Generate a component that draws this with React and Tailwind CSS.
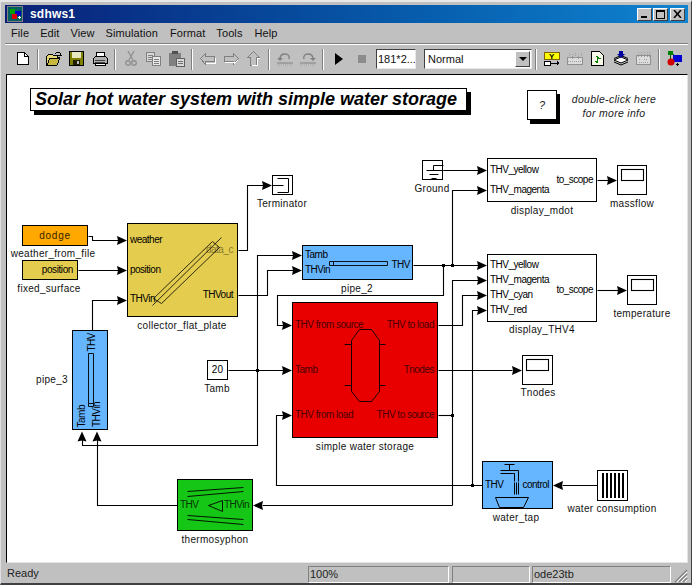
import React from "react";

const F = "font-['Liberation_Sans',Arial,sans-serif]";

function Ico({ children, w = 16, h = 16 }) {
  return (
    <svg width={w} height={h} viewBox={`0 0 ${w} ${h}`} shapeRendering="crispEdges" className="block">
      {children}
    </svg>
  );
}
const Cell = ({ children }) => <div className="w-[23px] flex justify-center items-center mb-[1px]">{children}</div>;
const Sep = () => <div className="mx-[3px] w-[2px] h-[21px] border-l border-l-[#808080] border-r border-r-white" />;

const Menu = ({ c, children }) => <span className={c}>{children}</span>;

function Lbl({ c, children }) {
  return <div className={`absolute -translate-x-1/2 whitespace-nowrap text-[10px] leading-[12px] tracking-[0.3px] text-[#111] ${c}`}>{children}</div>;
}
function Pt({ c, children }) {
  return <div className={`absolute whitespace-nowrap text-[10px] leading-[12px] tracking-[-0.5px] ${c}`}>{children}</div>;
}

const R = (x, y) => `M${x} ${y}L${x - 10} ${y - 4.5}L${x - 9} ${y}L${x - 10} ${y + 4.5}Z`;
const L = (x, y) => `M${x} ${y}L${x + 10} ${y - 4.5}L${x + 9} ${y}L${x + 10} ${y + 4.5}Z`;
const U = (x, y) => `M${x} ${y}L${x - 4.5} ${y + 10}L${x} ${y + 9}L${x + 4.5} ${y + 10}Z`;

const wires = [
  "M88 236H92V240H118", "M78 270H118", "M92 330V300H118", "M238 295H267V270H293", "M238 250H247V185H263",
  "M257 370V255H293", "M257 370V445H82V439", "M228 370H283", "M413 265H478", "M443 265V295H277V325H283",
  "M452 265V190H478", "M443 170H478", "M438 325H462V295H478", "M452 505V280H478", "M438 415H452",
  "M262 505H452", "M97 439V505H177", "M472 485V310H478", "M482 485H276V415H283", "M597 485H562",
  "M597 180H608", "M597 290H618", "M438 370H512",
];
const arrows = [
  R(127, 240), R(127, 270), R(127, 300), R(302, 255), R(302, 270), R(272, 185), R(292, 325), R(292, 370), R(292, 415),
  R(487, 170), R(487, 190), R(487, 265), R(487, 280), R(487, 295), R(487, 310), R(617, 180), R(627, 290), R(522, 370),
  L(253, 505), L(553, 485), U(82, 431), U(97, 431),
];
const dots = [[257, 370], [443, 265], [452, 265], [452, 415], [472, 485]];

export default function App() {
  return (
    <div className={`w-[694px] h-[585px] bg-white overflow-hidden ${F}`}>
      <div className="w-[692px] h-[585px] bg-[#c0c0c0] pt-[3px] pl-[4px] pr-[3px] border-t-2 border-t-[#e8e8e8] border-l border-l-[#e0e0e0] border-r border-r-[#404040] border-b-2 border-b-[#404040] box-border">
        {/* title bar */}
        <div className="h-[18px] flex items-center bg-linear-to-r from-[#0a1f78] to-[#1084d0] pl-[2px] pr-[2px]">
          <Ico>
            <rect x="0" y="0" width="16" height="16" fill="#808080" />
            <rect x="1" y="1" width="14" height="14" fill="#006060" />
            <path d="M3 3h5v5H3z" fill="#00a000" />
            <path d="M8 5h6v5H8z" fill="#0000c0" />
            <path d="M5 8h5v5H5z" fill="#e00000" />
            <path d="M11 11h3v1h-3zM12 10h1v3h-1z" fill="#fff" />
          </Ico>
          <span className="ml-[7px] text-[12px] font-bold text-white leading-none tracking-[0.2px]">sdhws1</span>
          <div className="ml-auto flex items-center mr-[1px]">
            <button className="w-[15px] h-[13px] bg-[#c0c0c0] border border-t-white border-l-white border-r-[#404040] border-b-[#404040] relative">
              <span className="absolute left-[3px] bottom-[2px] w-[6px] h-[2px] bg-black" />
            </button>
            <button className="w-[15px] h-[13px] ml-[1px] bg-[#c0c0c0] border border-t-white border-l-white border-r-[#404040] border-b-[#404040] flex items-center justify-center">
              <span className="block w-[9px] h-[9px] border border-black border-t-2" />
            </button>
            <button className="w-[15px] h-[13px] ml-[2px] bg-[#c0c0c0] border border-t-white border-l-white border-r-[#404040] border-b-[#404040] flex items-center justify-center">
              <svg width="9" height="8" viewBox="0 0 9 8"><path d="M1 0L8 8M8 0L1 8" stroke="#000" strokeWidth="1.5" /></svg>
            </button>
          </div>
        </div>
        {/* menu */}
        <div className="h-[19px] mt-[1px] flex items-center text-[11px] text-[#111] leading-none tracking-[0.1px] border-b-0">
          <Menu c="ml-[6px]">File</Menu>
          <Menu c="ml-[11px]">Edit</Menu>
          <Menu c="ml-[11px]">View</Menu>
          <Menu c="ml-[11px]">Simulation</Menu>
          <Menu c="ml-[12px]">Format</Menu>
          <Menu c="ml-[11px]">Tools</Menu>
          <Menu c="ml-[12px]">Help</Menu>
        </div>
        <div className="h-[2px] border-t border-t-[#808080] border-b border-b-white" />
        {/* toolbar */}
        <div className="h-[29px] flex items-center pl-[6px] pb-[1px]">
          <Cell><Ico w={12} h={13}><path d="M.5.5h7l4 4v8h-11z" fill="#fff" stroke="#000" /><path d="M7.5.5v4h4" fill="none" stroke="#000" /></Ico></Cell>
          <Sep />
          <Cell><Ico><path d="M.5 14.5V5.5l2-2h4l1 1h4v2h2l-3 8z" fill="#e6d878" stroke="#000" /><path d="M1 14l3-7h10l-3 7z" fill="#c8b840" stroke="#000" /><path d="M9 3l2-2 3 1v3M14 5l-2-1h4z" fill="none" stroke="#000" /></Ico></Cell>
          <Cell><Ico w={15} h={15}><rect x=".5" y=".5" width="14" height="14" fill="#808000" stroke="#000" /><rect x="3" y="1" width="9" height="6" fill="#e8e8c0" /><rect x="4" y="9" width="7" height="5" fill="#202000" /><rect x="8" y="10" width="2" height="3" fill="#c0c0c0" /></Ico></Cell>
          <Cell><Ico><path d="M4.5 1.5h8v5h-8z" fill="#fff" stroke="#000" /><path d="M1.5 7.5l2-2h10l2 2v5h-14z" fill="#b0b0b0" stroke="#000" /><path d="M3 9.5h10M3 11h10" stroke="#404040" /><path d="M3.5 12.5h10v2h-10z" fill="#fff" stroke="#000" /></Ico></Cell>
          <Sep />
          <Cell><svg width="12" height="15" viewBox="0 0 12 15"><path d="M3 0l5 9M9 0L4 9" stroke="#909090" strokeWidth="1.3" fill="none" /><circle cx="3" cy="12" r="2.3" fill="none" stroke="#909090" strokeWidth="1.4" /><circle cx="9" cy="12" r="2.3" fill="none" stroke="#909090" strokeWidth="1.4" /></svg></Cell>
          <Cell><Ico w={15} h={14}><path d="M.5.5h8v9h-8z" fill="#d8d8d8" stroke="#808080" /><path d="M2 3h5M2 5h5M2 7h5" stroke="#808080" /><path d="M6.5 4.5h8v9h-8z" fill="#e8e8e8" stroke="#808080" /><path d="M8 7h5M8 9h5M8 11h5" stroke="#808080" /></Ico></Cell>
          <Cell><Ico w={16} h={16}><rect x="0" y="2" width="12" height="13" fill="#808080" /><rect x="3" y="0" width="6" height="3" fill="#505050" /><path d="M7.5 7.5h8v8h-8z" fill="#d8d8d8" stroke="#606060" /><path d="M9 10h5M9 12h5" stroke="#707070" /></Ico></Cell>
          <Sep />
          <Cell><Ico w={16} h={12}><path d="M.5 5.5l5-5v3h9v5h-9v3z" fill="#c0c0c0" stroke="#808080" /><path d="M6 10v1l1-1h8V5" fill="none" stroke="#fff" /></Ico></Cell>
          <Cell><Ico w={16} h={12}><path d="M15.5 5.5l-5-5v3h-9v5h9v3z" fill="#c0c0c0" stroke="#808080" /><path d="M2 9h9v2l4-4" fill="none" stroke="#fff" /></Ico></Cell>
          <Cell><Ico w={13} h={15}><path d="M6.5.5l6 6h-3v8h-6v-8h-3z" fill="#c0c0c0" stroke="#808080" /><path d="M5 14h5V7h3" fill="none" stroke="#fff" /></Ico></Cell>
          <Sep />
          <Cell><svg width="16" height="14" viewBox="0 0 16 14"><path d="M12 7c1-3-1-5-4-5S3 4 3 7" fill="none" stroke="#808080" strokeWidth="1.4" /><path d="M0 6l3 3 3-3z" fill="#808080" /><path d="M0 11h16" stroke="#808080" /><path d="M0 13h16" stroke="#a0a0a0" strokeDasharray="1 1" /></svg></Cell>
          <Cell><svg width="16" height="14" viewBox="0 0 16 14"><path d="M4 7C3 4 5 2 8 2s5 2 5 5" fill="none" stroke="#808080" strokeWidth="1.4" /><path d="M10 6l3 3 3-3z" fill="#808080" /><path d="M0 11h16" stroke="#808080" /><path d="M0 13h16" stroke="#a0a0a0" strokeDasharray="1 1" /></svg></Cell>
          <Sep />
          <Cell><svg width="8" height="12" viewBox="0 0 8 12"><path d="M0 0l8 6-8 6z" fill="#000" /></svg></Cell>
          <Cell><div className="w-[8px] h-[8px] bg-[#8c8c8c]" /></Cell>
          <div className="ml-[3px] w-[40px] h-[20px] bg-white border border-t-[#404040] border-l-[#404040] border-r-[#e8e8e8] border-b-[#e8e8e8] text-[11px] leading-[18px] pl-[1px] text-[#111] overflow-hidden whitespace-nowrap">181*2...</div>
          <div className="ml-[8px] w-[108px] h-[20px] bg-white border border-t-[#404040] border-l-[#404040] border-r-[#e8e8e8] border-b-[#e8e8e8] text-[11px] leading-[18px] pl-[3px] text-[#111] relative">
            Normal
            <div className="absolute right-[1px] top-[1px] w-[15px] h-[16px] bg-[#c0c0c0] border border-t-white border-l-white border-r-[#404040] border-b-[#404040] flex items-center justify-center">
              <svg width="8" height="4" viewBox="0 0 8 4"><path d="M0 0h8L4 4z" fill="#000" /></svg>
            </div>
          </div>
          <Sep />
          <Cell><Ico w={16} h={14}><rect x=".5" y=".5" width="15" height="7" fill="#ffff00" stroke="#806000" /><text x="5" y="7" fontSize="8" fontWeight="bold" fill="#000">Y</text><rect x=".5" y="9.5" width="6" height="4" fill="#fff" stroke="#000" /><path d="M7 11h7" stroke="#000" /><path d="M13 9l3 2-3 2z" fill="#000" /></Ico></Cell>
          <Cell><Ico w={16} h={13}><rect x=".5" y="5.5" width="15" height="7" fill="#dcdcdc" stroke="#909090" /><path d="M2 1v6M5 2v5M8 1v6M11 2v5M14 1v6M1 9h14" stroke="#a0a0a0" strokeDasharray="1 1" /></Ico></Cell>
          <Cell><Ico w={13} h={15}><path d="M.5.5h8l4 4v10H.5z" fill="#f8f8e8" stroke="#000" /><path d="M5 5l3 2H6v2M7 12l-3-2h2V8" fill="none" stroke="#008000" strokeWidth="1" /></Ico></Cell>
          <Cell><svg width="16" height="15" viewBox="0 0 16 15"><path d="M8 6l7 3-7 3-7-3z" fill="#fff" stroke="#000" /><path d="M1 11l7 3 7-3M1 7.5l7-3 7 3" fill="none" stroke="#000" /><path d="M6 0h4v3h2L8 7 4 3h2z" fill="#0000a0" /></svg></Cell>
          <Cell><Ico w={15} h={13}><rect x=".5" y="3.5" width="14" height="9" fill="#dcdcdc" stroke="#909090" /><path d="M2 0v5M5 0v5M8 0v5M11 0v5M13 0v5M3 7h2M8 7h3M3 10h9" stroke="#a0a0a0" strokeDasharray="1 1" /></Ico></Cell>
          <Sep />
          <Cell><Ico w={15} h={15}><path d="M3 1v7h8M3 1l8 7" stroke="#006000" fill="none" /><rect x="1" y="0" width="5" height="4" fill="#008000" /><rect x="6" y="4" width="9" height="7" fill="#0000d0" /><circle cx="4" cy="11" r="3.5" fill="#d00000" shapeRendering="auto" /><path d="M10 12h1v3h-1zM9 13h3v1H9z" fill="#000" /></Ico></Cell>
        </div>
        {/* canvas */}
        <div className="ml-[1px] w-[682px] h-[489px] border border-t-black border-l-black border-r-[#e4e4e4] border-b-[#e4e4e4] bg-white relative overflow-hidden">
          {/* title annotation */}
          <div className="absolute left-[23px] top-[13px] w-[437px] h-[23px] border border-black bg-white shadow-[4px_4px_0_#000] text-[18px] font-bold italic leading-[21px] pl-[4px] whitespace-nowrap text-black">
            Solar hot water system with simple water storage
          </div>
          <div className="absolute left-[520px] top-[15px] w-[30px] h-[30px] border border-black bg-white shadow-[3px_4px_0_#000] text-[11px] italic flex items-center justify-center text-[#222]">?</div>
          <div className="absolute left-[564px] top-[17px] w-[86px] text-center text-[10.5px] leading-[14px] italic tracking-[0.3px] text-[#222] whitespace-nowrap">
            double-click here<br />for more info
          </div>

          {/* blocks */}
          <div className="absolute left-[15px] top-[150px] w-[66px] h-[21px] border border-black bg-[#ffa800] text-[10px] leading-[19px] text-center tracking-[0.7px] text-[#332200]">dodge</div>
          <div className="absolute left-[15px] top-[185px] w-[56px] h-[20px] border border-black bg-[#e4cd4e] text-[10px] leading-[18px] text-right pr-[4px] tracking-[-0.4px]">position</div>
          <div className="absolute left-[120px] top-[148px] w-[111px] h-[94px] border border-black bg-[#e4cd4e]">
            <Pt c="left-[2px] top-[10px]">weather</Pt>
            <Pt c="left-[2px] top-[40px]">position</Pt>
            <Pt c="left-[2px] top-[69px]">THVin</Pt>
            <Pt c="right-[4px] top-[20px] text-[#8a7a30]">data_c</Pt>
            <Pt c="right-[4px] top-[65px]">THVout</Pt>
          </div>
          <div className="absolute left-[295px] top-[170px] w-[111px] h-[35px] border border-black bg-[#66b5ff]">
            <Pt c="left-[2px] top-[3px]">Tamb</Pt>
            <Pt c="left-[2px] top-[18px]">THVin</Pt>
            <Pt c="right-[2px] top-[13px]">THV</Pt>
          </div>
          <div className="absolute left-[65px] top-[255px] w-[36px] h-[100px] border border-black bg-[#66b5ff]">
            <Pt c="left-[3px] bottom-[2px] [writing-mode:vertical-rl] rotate-180">Tamb</Pt>
            <Pt c="left-[18px] bottom-[2px] [writing-mode:vertical-rl] rotate-180">THVin</Pt>
            <Pt c="left-[13px] top-[2px] [writing-mode:vertical-rl] rotate-180">THV</Pt>
          </div>
          <div className="absolute left-[285px] top-[227px] w-[146px] h-[136px] border border-black bg-[#e80000] text-[#4a0000]">
            <Pt c="left-[2px] top-[16px]">THV from source</Pt>
            <Pt c="left-[2px] top-[61px]">Tamb</Pt>
            <Pt c="left-[2px] top-[106px]">THV from load</Pt>
            <Pt c="right-[3px] top-[16px]">THV to load</Pt>
            <Pt c="right-[3px] top-[61px]">Tnodes</Pt>
            <Pt c="right-[3px] top-[106px]">THV to source</Pt>
          </div>
          <div className="absolute left-[480px] top-[83px] w-[110px] h-[44px] border border-black bg-white">
            <Pt c="left-[2px] top-[5px]">THV_yellow</Pt>
            <Pt c="left-[2px] top-[25px]">THV_magenta</Pt>
            <Pt c="right-[3px] top-[15px]">to_scope</Pt>
          </div>
          <div className="absolute left-[480px] top-[179px] w-[110px] h-[68px] border border-black bg-white">
            <Pt c="left-[2px] top-[4px]">THV_yellow</Pt>
            <Pt c="left-[2px] top-[19px]">THV_magenta</Pt>
            <Pt c="left-[2px] top-[34px]">THV_cyan</Pt>
            <Pt c="left-[2px] top-[49px]">THV_red</Pt>
            <Pt c="right-[3px] top-[29px]">to_scope</Pt>
          </div>
          <div className="absolute left-[200px] top-[285px] w-[21px] h-[20px] border border-black bg-white text-[10px] leading-[18px] text-center tracking-[0.3px]">20</div>
          <div className="absolute left-[170px] top-[404px] w-[76px] h-[52px] border border-black bg-[#16c616] text-[#053305]">
            <Pt c="left-[2px] top-[19px]">THV</Pt>
            <Pt c="right-[3px] top-[19px]">THVin</Pt>
          </div>
          <div className="absolute left-[475px] top-[386px] w-[71px] h-[48px] border border-black bg-[#66b5ff]">
            <Pt c="left-[2px] top-[17px]">THV</Pt>
            <Pt c="right-[3px] top-[17px]">control</Pt>
          </div>
          <div className="absolute left-[590px] top-[395px] w-[31px] h-[31px] border border-black bg-white" />
          <div className="absolute left-[265px] top-[100px] w-[21px] h-[20px] border border-black bg-white" />
          <div className="absolute left-[415px] top-[85px] w-[21px] h-[20px] border border-black bg-white" />
          <div className="absolute left-[610px] top-[90px] w-[30px] h-[30px] border border-black bg-white" />
          <div className="absolute left-[620px] top-[200px] w-[30px] h-[30px] border border-black bg-white" />
          <div className="absolute left-[515px] top-[280px] w-[31px] h-[30px] border border-black bg-white" />

          {/* labels */}
          <Lbl c="left-[46px] top-[173px]">weather_from_file</Lbl>
          <Lbl c="left-[42px] top-[208px]">fixed_surface</Lbl>
          <Lbl c="left-[175px] top-[245px]">collector_flat_plate</Lbl>
          <Lbl c="left-[275px] top-[123px]">Terminator</Lbl>
          <Lbl c="left-[425px] top-[108px]">Ground</Lbl>
          <Lbl c="left-[350px] top-[208px]">pipe_2</Lbl>
          <Lbl c="left-[535px] top-[130px]">display_mdot</Lbl>
          <Lbl c="left-[625px] top-[123px]">massflow</Lbl>
          <Lbl c="left-[535px] top-[249px]">display_THV4</Lbl>
          <Lbl c="left-[635px] top-[233px]">temperature</Lbl>
          <Lbl c="left-[358px] top-[366px]">simple water storage</Lbl>
          <Lbl c="left-[531px] top-[312px]">Tnodes</Lbl>
          <Lbl c="left-[210px] top-[308px]">Tamb</Lbl>
          <Lbl c="left-[45px] top-[299px]">pipe_3</Lbl>
          <Lbl c="left-[208px] top-[459px]">thermosyphon</Lbl>
          <Lbl c="left-[509px] top-[437px]">water_tap</Lbl>
          <Lbl c="left-[605px] top-[428px]">water consumption</Lbl>

          {/* wires and block symbols */}
          <svg className="absolute left-0 top-0 pointer-events-none" width="680" height="487" viewBox="7 75 680 487">
            <g transform="translate(.5 .5)" fill="none" stroke="#000" strokeWidth="1.1">
              {wires.map((d) => <path key={d} d={d} />)}
              {/* collector symbol */}
              <path d="M153 298L212 241L219 247L161 303Z M152 305L221 237" strokeWidth="0.8" />
              {/* pipe 2 */}
              <path d="M333 261H387V265H333ZM333 261H329V265H333" strokeWidth="0.9" />
              {/* pipe 3 */}
              <path d="M88 353H93V403H88Z M88 403V406H93V403" strokeWidth="0.9" />
              {/* storage */}
              <path d="M359 329H371L379 340V391L371 401H359L351 391V340Z M344 344H351 M344 385H351 M379 344H385 M379 385H385" strokeWidth="0.9" />
              {/* thermosyphon */}
              <path d="M187 491L243 487M187 496L243 491M187 515L243 519M187 519L243 524M208 505L222 500V511Z" strokeWidth="0.9" />
              {/* tap */}
              <path d="M504 464H514M509 464V470M500 470H518V481M500 473H514V481M514 482V494M516 482V494M518 482V494M495 497H528L523 507H499Z" strokeWidth="1" />
              {/* terminator */}
              <path d="M277 178H288V192H277M272 185H283" strokeWidth="1" />
              {/* ground */}
              <path d="M426 170H443M433 170V165H443M429 174H438M431 178H436" strokeWidth="1" />
              {/* scopes */}
              <rect x="621" y="169" width="22" height="11" />
              <rect x="631" y="279" width="22" height="11" />
              <rect x="526" y="359" width="22" height="11" />
            </g>
            <g fill="#000">
              {arrows.map((d) => <path key={d} d={d} transform="translate(0 .5)" />)}
              {dots.map(([x, y]) => <rect key={x + "-" + y} x={x - 1} y={y - 1} width="3" height="3" />)}
              {[602, 606, 610, 614, 618, 622].map((x) => <rect key={x} x={x} y="473" width="2" height="25" />)}
            </g>
          </svg>
        </div>
        {/* status bar */}
        <div className="h-[20px] flex items-start text-[11px] text-[#222] relative">
          <div className="w-[303px] pl-[2px] h-[17px] mt-[3px] leading-[15px]">Ready</div>
          <div className="w-[141px] h-[17px] mt-[3px] border border-t-[#808080] border-l-[#808080] border-r-white border-b-white leading-[15px] pl-[1px]">100%</div>
          <div className="w-[78px] h-[17px] mt-[3px] ml-[3px] border border-t-[#808080] border-l-[#808080] border-r-white border-b-white" />
          <div className="w-[139px] h-[17px] mt-[3px] ml-[2px] border border-t-[#808080] border-l-[#808080] border-r-white border-b-white leading-[15px] pl-[1px]">ode23tb</div>
          <svg className="absolute right-[0px] bottom-[0px]" width="14" height="14" viewBox="0 0 14 14">
            <path d="M13 1L1 13M13 5L5 13M13 9L9 13" stroke="#808080" strokeWidth="1.2" />
            <path d="M13 3L3 13M13 7L7 13M13 11L11 13" stroke="#fff" strokeWidth="1" />
          </svg>
        </div>
      </div>
    </div>
  );
}
